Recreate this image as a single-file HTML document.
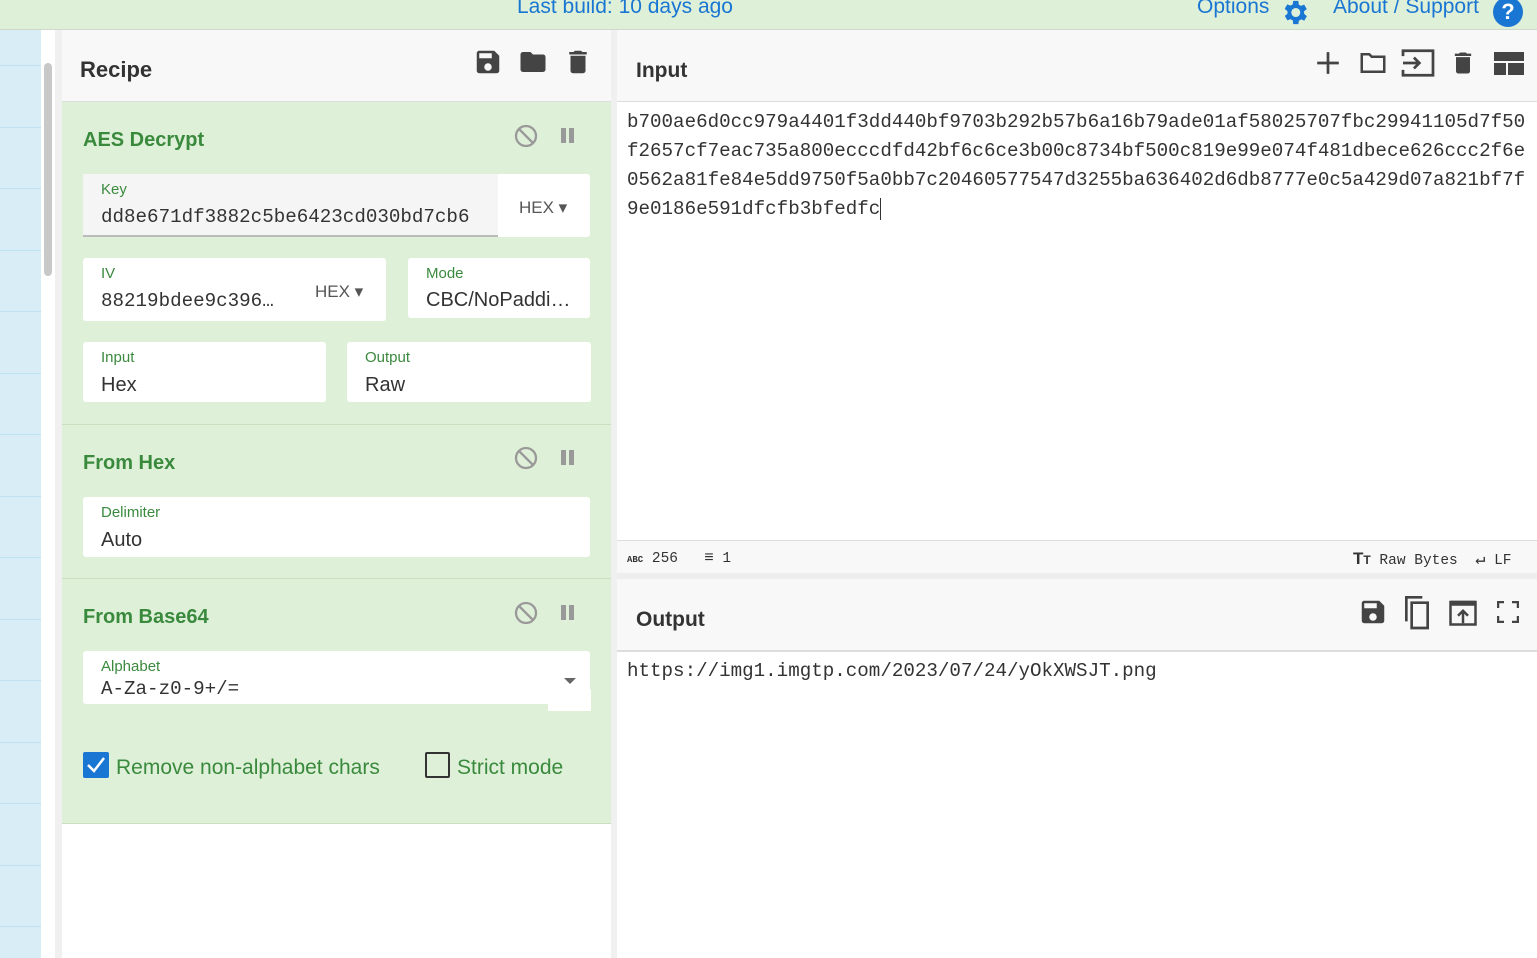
<!DOCTYPE html>
<html><head><style>
*{box-sizing:border-box;margin:0;padding:0}
body{width:1537px;height:958px;overflow:hidden;background:#fff;font-family:"Liberation Sans",sans-serif;position:relative}
.abs{position:absolute}
.top{left:0;top:0;width:1537px;height:30px;background:#dff0d8;border-bottom:1px solid #d0d8cc}
.blue{color:#1976d2;font-size:21px}
.side{left:0;top:30px;width:41px;height:928px;background:#d9edf7}
.side div{position:absolute;left:0;width:41px;height:1px;background:#bfe0f0}
.rec{left:62px;top:30px;width:549px;height:928px;background:#fff}
.hdr{background:#f8f8f8;border-bottom:1px solid #ddd}
.ttl{font-weight:bold;font-size:22px;color:#333}
.op{left:62px;width:549px;background:#dff0d8;border-bottom:1px solid #c8e0c0}
.opt{font-weight:bold;font-size:20px;color:#3a8a3e}
.fld{background:#fff;border-radius:3px}
.lbl{font-size:15px;color:#3a8a3e}
.val{font-size:20px;color:#333}
.mono{font-family:"Liberation Mono",monospace}
.hex{font-size:17px;color:#555}
</style></head><body>
<div class="abs top"></div>
<div class="abs blue" style="left:517px;top:-5px">Last build: 10 days ago</div>
<div class="abs blue" style="left:1197px;top:-5px">Options</div>
<svg class="abs" style="left:1279px;top:-3px" width="31" height="31" viewBox="0 0 24 24"><path fill="#1976d2" d="M19.4 13a7.5 7.5 0 000-2l2.1-1.6-2-3.5-2.5 1a7.4 7.4 0 00-1.7-1L15 3h-4l-.4 2.7a7.4 7.4 0 00-1.7 1l-2.5-1-2 3.5L6.6 11a7.5 7.5 0 000 2l-2.1 1.6 2 3.5 2.5-1a7.4 7.4 0 001.7 1L11 21h4l.4-2.7a7.4 7.4 0 001.7-1l2.5 1 2-3.5zM13 15.5a3.5 3.5 0 110-7 3.5 3.5 0 010 7z"/></svg>
<div class="abs blue" style="left:1333px;top:-5px">About / Support</div>
<div class="abs" style="left:1493px;top:-3px;width:30px;height:30px;border-radius:50%;background:#1976d2;color:#fff;font-weight:bold;font-size:22px;text-align:center;line-height:30px">?</div>

<div class="abs side"><div style="top:35px"></div><div style="top:97px"></div><div style="top:158px"></div><div style="top:220px"></div><div style="top:281px"></div><div style="top:343px"></div><div style="top:404px"></div><div style="top:466px"></div><div style="top:527px"></div><div style="top:589px"></div><div style="top:650px"></div><div style="top:712px"></div><div style="top:773px"></div><div style="top:835px"></div><div style="top:896px"></div></div>
<div class="abs" style="left:41px;top:30px;width:14px;height:928px;background:#fff"></div>
<div class="abs" style="left:44px;top:63px;width:8px;height:213px;background:#c8c8c8;border-radius:4px"></div>
<div class="abs" style="left:55px;top:30px;width:7px;height:928px;background:#f0f0f0"></div>
<div class="abs" style="left:611px;top:30px;width:6px;height:928px;background:#f0f0f0"></div>

<div class="abs rec"></div>
<div class="abs hdr" style="left:62px;top:30px;width:549px;height:72px"></div>
<div class="abs ttl" style="left:80px;top:57px">Recipe</div>
<svg class="abs" style="left:473px;top:47px" width="30" height="30" viewBox="0 0 24 24"><path fill="#444" d="M17 3H5a2 2 0 00-2 2v14a2 2 0 002 2h14a2 2 0 002-2V7zm-5 16a3 3 0 110-6 3 3 0 010 6zm3-10H5V5h10z"/></svg>
<svg class="abs" style="left:517px;top:47px" width="32" height="30" viewBox="0 0 24 24"><path fill="#444" d="M10 4H4a2 2 0 00-2 2v12a2 2 0 002 2h16a2 2 0 002-2V8a2 2 0 00-2-2h-8z"/></svg>
<svg class="abs" style="left:563px;top:46px" width="30" height="32" viewBox="0 0 24 24"><path fill="#444" d="M6 19a2 2 0 002 2h8a2 2 0 002-2V7H6zM19 4h-3.5l-1-1h-5l-1 1H5v2h14z"/></svg>

<div class="abs op" style="top:102px;height:323px"></div>
<div class="abs opt" style="left:83px;top:129px">AES Decrypt</div>
<svg class="abs" style="left:514px;top:124px" width="24" height="24" viewBox="0 0 24 24"><circle cx="12" cy="12" r="10" fill="none" stroke="#999" stroke-width="2.3"/><path d="M5 5l14 14" stroke="#999" stroke-width="2.3"/></svg>
<div class="abs" style="left:561px;top:128px;width:5px;height:15px;background:#999"></div><div class="abs" style="left:569px;top:128px;width:5px;height:15px;background:#999"></div>
<div class="abs fld" style="left:83px;top:174px;width:507px;height:63px"></div>
<div class="abs" style="left:83px;top:174px;width:415px;height:63px;background:#f5f5f5;border-bottom:2px solid #bbb"></div>
<div class="abs lbl" style="left:101px;top:181px">Key</div>
<div class="abs val mono" style="left:101px;top:206px;font-size:19.2px">dd8e671df3882c5be6423cd030bd7cb6</div>
<div class="abs hex" style="left:519px;top:198px">HEX &#9662;</div>
<div class="abs fld" style="left:83px;top:258px;width:303px;height:63px"></div>
<div class="abs lbl" style="left:101px;top:265px">IV</div>
<div class="abs val mono" style="left:101px;top:290px;font-size:19.2px">88219bdee9c396…</div>
<div class="abs hex" style="left:315px;top:282px">HEX &#9662;</div>
<div class="abs fld" style="left:408px;top:258px;width:182px;height:60px"></div>
<div class="abs lbl" style="left:426px;top:265px">Mode</div>
<div class="abs val" style="left:426px;top:289px">CBC/NoPaddi…</div>
<div class="abs fld" style="left:83px;top:342px;width:243px;height:60px"></div>
<div class="abs lbl" style="left:101px;top:349px">Input</div>
<div class="abs val" style="left:101px;top:374px">Hex</div>
<div class="abs fld" style="left:347px;top:342px;width:244px;height:60px"></div>
<div class="abs lbl" style="left:365px;top:349px">Output</div>
<div class="abs val" style="left:365px;top:374px">Raw</div>

<div class="abs op" style="top:425px;height:154px"></div>
<div class="abs opt" style="left:83px;top:452px">From Hex</div>
<svg class="abs" style="left:514px;top:446px" width="24" height="24" viewBox="0 0 24 24"><circle cx="12" cy="12" r="10" fill="none" stroke="#999" stroke-width="2.3"/><path d="M5 5l14 14" stroke="#999" stroke-width="2.3"/></svg>
<div class="abs" style="left:561px;top:450px;width:5px;height:15px;background:#999"></div><div class="abs" style="left:569px;top:450px;width:5px;height:15px;background:#999"></div>
<div class="abs fld" style="left:83px;top:497px;width:507px;height:60px"></div>
<div class="abs lbl" style="left:101px;top:504px">Delimiter</div>
<div class="abs val" style="left:101px;top:529px">Auto</div>

<div class="abs op" style="top:579px;height:245px"></div>
<div class="abs opt" style="left:83px;top:606px">From Base64</div>
<svg class="abs" style="left:514px;top:601px" width="24" height="24" viewBox="0 0 24 24"><circle cx="12" cy="12" r="10" fill="none" stroke="#999" stroke-width="2.3"/><path d="M5 5l14 14" stroke="#999" stroke-width="2.3"/></svg>
<div class="abs" style="left:561px;top:605px;width:5px;height:15px;background:#999"></div><div class="abs" style="left:569px;top:605px;width:5px;height:15px;background:#999"></div>
<div class="abs fld" style="left:83px;top:651px;width:507px;height:53px"></div>
<div class="abs" style="left:548px;top:690px;width:43px;height:21px;background:#fff"></div>
<div class="abs lbl" style="left:101px;top:658px">Alphabet</div>
<div class="abs val mono" style="left:101px;top:678px;font-size:19.2px">A-Za-z0-9+/=</div>
<div class="abs" style="left:564px;top:678px;border-left:6px solid transparent;border-right:6px solid transparent;border-top:6px solid #666"></div>
<div class="abs" style="left:83px;top:752px;width:26px;height:26px;background:#1976d2;border-radius:2px"></div>
<svg class="abs" style="left:85px;top:754px" width="22" height="22" viewBox="0 0 22 22"><path d="M3 11l6 6L19 4" fill="none" stroke="#fff" stroke-width="2.5"/></svg>
<div class="abs" style="left:116px;top:756px;font-size:21px;color:#3a8a3e">Remove non-alphabet chars</div>
<div class="abs" style="left:425px;top:752px;width:25px;height:26px;border:2px solid #333;border-radius:2px"></div>
<div class="abs" style="left:457px;top:756px;font-size:21px;color:#3a8a3e">Strict mode</div>

<!-- Input -->
<div class="abs hdr" style="left:617px;top:30px;width:920px;height:72px"></div>
<div class="abs ttl" style="left:636px;top:59px;font-size:21px">Input</div>
<svg class="abs" style="left:1315px;top:50px" width="26" height="26" viewBox="0 0 24 24"><path d="M12 2v20M2 12h20" stroke="#444" stroke-width="2.5"/></svg>
<svg class="abs" style="left:1357px;top:48px" width="32" height="30" viewBox="0 0 24 24"><path fill="none" stroke="#444" stroke-width="2" d="M3 5h6l2 2h10v12H3z"/></svg>
<svg class="abs" style="left:1400px;top:48px" width="36" height="30" viewBox="0 0 26 22"><path fill="none" stroke="#444" stroke-width="2" d="M2 6V2h22v18H2v-4"/><path fill="none" stroke="#444" stroke-width="2" d="M2 11h12M10 7l4 4-4 4"/></svg>
<svg class="abs" style="left:1449px;top:47px" width="28" height="32" viewBox="0 0 24 24"><path fill="#444" d="M6 19a2 2 0 002 2h8a2 2 0 002-2V7H6zM19 4h-3.5l-1-1h-5l-1 1H5v2h14z"/></svg>
<svg class="abs" style="left:1494px;top:52px" width="30" height="24" viewBox="0 0 30 24"><path fill="#444" d="M0 0h30v9H0zM0 11h12v12H0zM14 11h16v12H14z"/></svg>
<div class="abs mono" style="left:627px;top:108px;font-size:19.2px;line-height:29px;color:#333;width:905px;word-break:break-all">b700ae6d0cc979a4401f3dd440bf9703b292b57b6a16b79ade01af58025707fbc29941105d7f50f2657cf7eac735a800ecccdfd42bf6c6ce3b00c8734bf500c819e99e074f481dbece626ccc2f6e0562a81fe84e5dd9750f5a0bb7c20460577547d3255ba636402d6db8777e0c5a429d07a821bf7f9e0186e591dfcfb3bfedfc<span style="border-left:1px solid #333"></span></div>
<div class="abs" style="left:617px;top:540px;width:920px;height:33px;background:#f8f8f8;border-top:1px solid #ddd"></div>
<div class="abs mono" style="left:627px;top:549px;font-size:14.5px;color:#333"><b style="font-size:9px">ABC</b> 256 &nbsp; <span style="font-size:16px">&#8801;</span> 1</div>
<div class="abs mono" style="left:1353px;top:549px;font-size:14.5px;color:#333"><b style="font-size:17px;font-family:Liberation Sans">T</b><b style="font-size:12px;font-family:Liberation Sans">T</b> Raw Bytes &nbsp;<span style="font-size:17px">&#8629;</span> LF</div>
<div class="abs" style="left:617px;top:573px;width:920px;height:6px;background:#eee"></div>
<div class="abs hdr" style="left:617px;top:579px;width:920px;height:72px"></div>
<div class="abs ttl" style="left:636px;top:608px;font-size:21px">Output</div>
<svg class="abs" style="left:1358px;top:597px" width="30" height="30" viewBox="0 0 24 24"><path fill="#444" d="M17 3H5a2 2 0 00-2 2v14a2 2 0 002 2h14a2 2 0 002-2V7zm-5 16a3 3 0 110-6 3 3 0 010 6zm3-10H5V5h10z"/></svg>
<svg class="abs" style="left:1401px;top:594px" width="32" height="36" viewBox="0 0 24 26"><path fill="none" stroke="#444" stroke-width="2" d="M4 20V2h12M8 6h12v19H8z"/></svg>
<svg class="abs" style="left:1448px;top:598px" width="30" height="28" viewBox="0 0 24 22"><path fill="none" stroke="#444" stroke-width="2" d="M2 3h20v18H2z"/><path fill="#444" d="M2 2h20v4H2z"/><path fill="none" stroke="#444" stroke-width="2" d="M12 20v-9M8 14l4-4 4 4"/></svg>
<svg class="abs" style="left:1497px;top:601px" width="22" height="22" viewBox="0 0 22 22"><path fill="none" stroke="#444" stroke-width="2.5" d="M1 7V1h6M15 1h6v6M21 15v6h-6M7 21H1v-6"/></svg>
<div class="abs" style="left:617px;top:651px;width:920px;height:1px;background:#ddd"></div>
<div class="abs mono" style="left:627px;top:660px;font-size:19.2px;color:#333">https://img1.imgtp.com/2023/07/24/yOkXWSJT.png</div>
</body></html>
